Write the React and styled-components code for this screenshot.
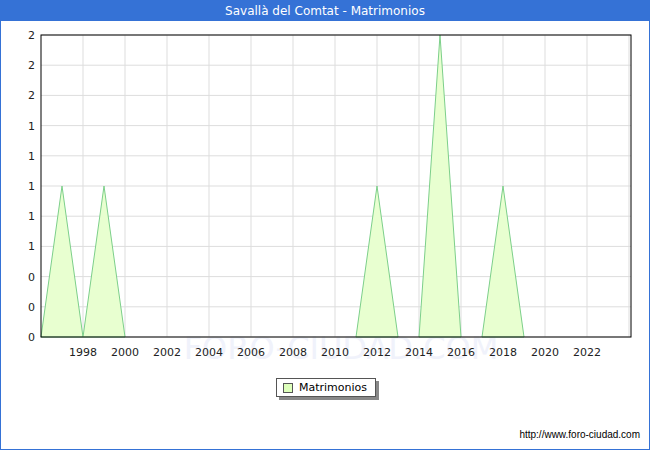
import React from "react";
import styled, { createGlobalStyle } from "styled-components";

const G = createGlobalStyle`
  body { margin: 0; font-family: "DejaVu Sans", sans-serif; }
`;
const Frame = styled.div`
  width: 650px; height: 450px; box-sizing: border-box;
  border: 1px solid #3572d6; border-top: none;
  display: flex; flex-direction: column; background: #fff;
`;
const Header = styled.div`
  height: 21px; background: #3572d6; color: #fff; font-size: 12px;
  display: flex; align-items: center; justify-content: center; margin: 0 -1px;
`;
const Legend = styled.div`
  align-self: center; margin-top: 12px; margin-left: 2px;
  display: flex; align-items: center; gap: 6px;
  border: 1px solid #555; box-shadow: 3px 3px 0 #888;
  padding: 2px 8px 2px 6px; font-size: 11px; color: #000;
`;
const Swatch = styled.span`
  width: 8px; height: 8px; background: #ddffbb; border: 1px solid #555;
`;
const Footer = styled.div`
  margin-top: auto; margin-bottom: 9px; align-self: flex-end; margin-right: 9px;
  font-family: "Liberation Sans", sans-serif; font-size: 10px; color: #000;
`;

const X0 = 40, YW = 21, TOP = 14, BOT = 316;
const xs = (y) => X0 + (y - 1996) * YW;
const ys = (v) => BOT - v * 151;
const peaks = [[1997, 1], [1999, 1], [2012, 1], [2015, 2], [2018, 1]];
const ylabels = ["2","2","2","1","1","1","1","1","0","0","0"];

export default function App() {
  return (
    <Frame>
      <G />
      <Header>Savallà del Comtat - Matrimonios</Header>
      <svg width="648" height="345" style={{ display: "block" }}>
        <text x="340" y="338" textAnchor="middle" fontSize="32" fill="#f0f2fb" fontFamily="DejaVu Sans">FORO-CIUDAD.COM</text>
        {ylabels.map((l, i) => {
          const y = TOP + i * 30.2;
          return (
            <g key={i}>
              <line x1={X0} x2={630} y1={y} y2={y} stroke="#ddd" />
              <text x={34} y={y + 4} textAnchor="end" fontSize="11" fill="#222">{l}</text>
            </g>
          );
        })}
        {Array.from({ length: 14 }, (_, i) => 1998 + i * 2).map((yr) => (
          <g key={yr}>
            <line x1={xs(yr)} x2={xs(yr)} y1={TOP} y2={BOT} stroke="#ddd" />
            {yr <= 2022 && <text x={xs(yr)} y={BOT + 19} textAnchor="middle" fontSize="11" fill="#222">{yr}</text>}
          </g>
        ))}
        {peaks.map(([yr, v]) => (
          <polygon key={yr}
            points={`${xs(yr - 1)},${BOT} ${xs(yr)},${ys(v)} ${xs(yr + 1)},${BOT}`}
            fill="#e8ffd0" stroke="#7ccf8a" strokeWidth="1" />
        ))}
        <rect x={X0} y={TOP} width={590} height={BOT - TOP} fill="none" stroke="#000" />
      </svg>
      <Legend><Swatch />Matrimonios</Legend>
      <Footer>http://www.foro-ciudad.com</Footer>
    </Frame>
  );
}
